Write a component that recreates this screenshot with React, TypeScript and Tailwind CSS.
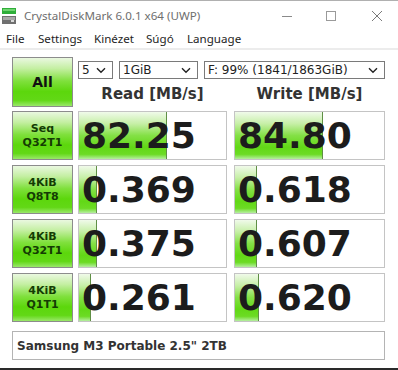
import React from "react";

const rows = [
  { label: ["Seq", "Q32T1"], read: "82.25", readBar: 88, write: "84.80", writeBar: 88 },
  { label: ["4KiB", "Q8T8"], read: "0.369", readBar: 18, write: "0.618", writeBar: 22 },
  { label: ["4KiB", "Q32T1"], read: "0.375", readBar: 18, write: "0.607", writeBar: 22 },
  { label: ["4KiB", "Q1T1"], read: "0.261", readBar: 12, write: "0.620", writeBar: 24 },
];

const menu = [
  { text: "File", w: "w-[32px]" },
  { text: "Settings", w: "w-[56px]" },
  { text: "Kinézet", w: "w-[52px]" },
  { text: "Súgó", w: "w-[41px]" },
  { text: "Language", w: "w-[60px]" },
];

const greenBtn =
  "border border-[#8c8c8c] bg-[linear-gradient(to_bottom,#eaf8e0_0%,#c4efa2_22%,#7fe03c_48%,#5cd70c_70%,#62d816_88%,#9ae86a_100%)]";

const Chevron = () => (
  <svg width="10" height="7" viewBox="0 0 10 7" className="shrink-0">
    <path d="M1 1.2 L5 5.2 L9 1.2" fill="none" stroke="#222" strokeWidth="1.4" />
  </svg>
);

const Select: React.FC<{ value: string; className: string }> = ({ value, className }) => (
  <div
    className={`h-[18px] flex items-center justify-between border border-[#7a7a7a] bg-white pl-[3px] pr-[6px] text-[12px] text-[#222] font-['DejaVu_Sans',sans-serif] ${className}`}
  >
    <span className="leading-none">{value}</span>
    <Chevron />
  </div>
);

const ValueCell: React.FC<{ value: string; bar: number; className: string }> = ({ value, bar, className }) => (
  <div className={`relative h-full border border-[#c4c4c4] bg-white overflow-hidden ${className}`}>
    <div
      className="absolute left-0 top-0 bottom-0 border-r border-r-[#5f8f45] bg-[linear-gradient(to_bottom,#f0faea_0%,#c6efa6_25%,#84e046_50%,#62d816_75%,#6cdb24_90%,#b5efa0_100%)]"
      style={{ width: bar }}
    />
    <div className="relative flex h-full items-center pl-[3px] text-[36px] font-bold leading-none text-[#1c1c1c] font-['DejaVu_Sans',sans-serif]">
      {value}
    </div>
  </div>
);

export default function App() {
  return (
    <div className="w-[398px] h-[370px] overflow-hidden bg-white flex flex-col">
      {/* Title bar */}
      <div className="h-[30px] border-t border-t-[#b0b0b0] flex items-center shrink-0">
        <svg width="14" height="17" viewBox="0 0 14 17" className="ml-[2px] mt-[1px]">
          <rect x="0" y="0" width="14" height="6" fill="#2fae3a" />
          <rect x="1" y="1" width="12" height="2" fill="#6fd46f" />
          <rect x="0" y="8" width="14" height="8" fill="#707070" />
          <rect x="1" y="9" width="12" height="3" fill="#a8a8a8" />
          <rect x="9" y="12" width="3" height="2" fill="#d8d8d8" />
        </svg>
        <span className="ml-[8px] text-[11.6px] text-[#6e6e6e] font-['Noto_Sans',sans-serif]">
          CrystalDiskMark 6.0.1 x64 (UWP)
        </span>
        <div className="ml-auto flex items-center">
          <svg width="12" height="12" viewBox="0 0 12 12" className="mr-[32px]">
            <path d="M1 6.5 H11" stroke="#8a8a8a" strokeWidth="1" />
          </svg>
          <svg width="12" height="12" viewBox="0 0 12 12" className="mr-[34px]">
            <rect x="1.5" y="1.5" width="9" height="9" fill="none" stroke="#9a9a9a" strokeWidth="1" />
          </svg>
          <svg width="12" height="12" viewBox="0 0 12 12" className="mr-[15px]">
            <path d="M1 1 L11 11 M11 1 L1 11" stroke="#7a7a7a" strokeWidth="1" />
          </svg>
        </div>
      </div>

      {/* Menu bar */}
      <div className="h-[18px] flex items-center pl-[6px] text-[11.6px] text-[#1e1e1e] font-['Noto_Sans',sans-serif] shrink-0">
        {menu.map((m) => (
          <span key={m.text} className={`${m.w} whitespace-nowrap`}>
            {m.text}
          </span>
        ))}
      </div>
      <div className="h-[2px] bg-[#ececec] shrink-0" />

      {/* Main panel */}
      <div className="flex flex-col pl-[12px] pt-[7px]">
        <div className="flex gap-[5px]">
          <button
            className={`w-[61px] h-[50px] flex items-center justify-center text-[14px] font-bold text-[#111] font-['DejaVu_Sans',sans-serif] ${greenBtn}`}
          >
            All
          </button>
          <div className="flex flex-col">
            <div className="flex gap-[6px] mt-[4px]">
              <Select value="5" className="w-[35px]" />
              <Select value="1GiB" className="w-[79px]" />
              <Select value="F: 99% (1841/1863GiB)" className="w-[181px]" />
            </div>
            <div className="flex gap-[7px] mt-[8px] text-[15px] font-bold text-[#333] font-['DejaVu_Sans',sans-serif] leading-none">
              <div className="w-[149px] text-center">Read [MB/s]</div>
              <div className="w-[151px] text-center">Write [MB/s]</div>
            </div>
          </div>
        </div>

        <div className="flex flex-col gap-[5px] mt-[4px]">
          {rows.map((r, i) => (
            <div key={i} className="flex h-[49px]">
              <button
                className={`w-[61px] h-full flex flex-col items-center justify-center text-[11px] leading-[14px] font-bold text-[#143c04] font-['DejaVu_Sans',sans-serif] ${greenBtn}`}
              >
                <span>{r.label[0]}</span>
                <span>{r.label[1]}</span>
              </button>
              <ValueCell value={r.read} bar={r.readBar} className="w-[149px] ml-[5px]" />
              <ValueCell value={r.write} bar={r.writeBar} className="w-[151px] ml-[7px]" />
            </div>
          ))}
        </div>

        <div className="mt-[9px] w-[373px] h-[29px] border border-[#b4b4b4] bg-white flex items-center pl-[4px] text-[12px] font-bold text-[#333] font-['DejaVu_Sans',sans-serif]">
          Samsung M3 Portable 2.5" 2TB
        </div>
      </div>

      <div className="mt-auto h-[2px] bg-[#2a2a2a]" />
    </div>
  );
}
